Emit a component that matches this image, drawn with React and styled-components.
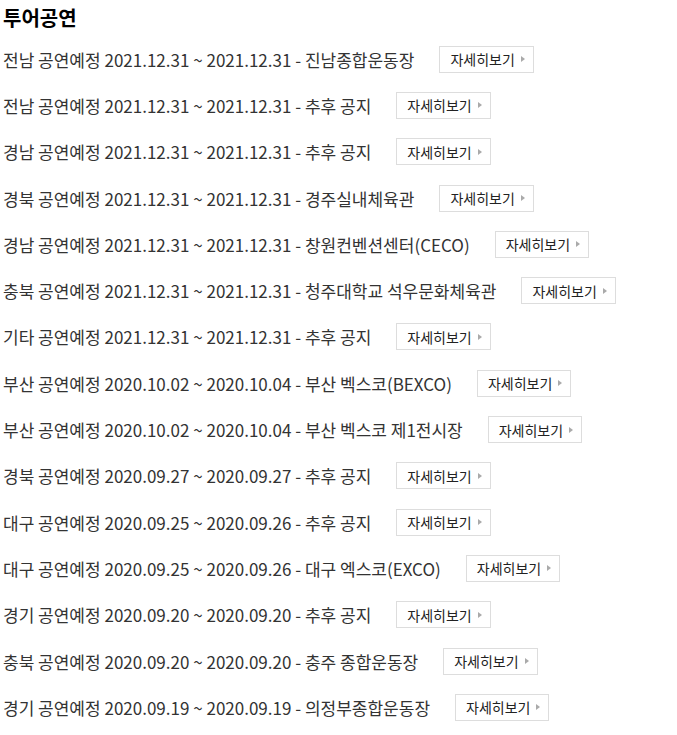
import React from "react";
import styled, { createGlobalStyle } from "styled-components";

const GlobalStyle = createGlobalStyle`
  body {
    margin: 0;
    background: #fff;
    font-family: "Noto Sans CJK KR", "Noto Sans", sans-serif;
    color: #333;
  }
`;

const tours = [
  ["전남", "2021.12.31", "2021.12.31", "진남종합운동장"],
  ["전남", "2021.12.31", "2021.12.31", "추후 공지"],
  ["경남", "2021.12.31", "2021.12.31", "추후 공지"],
  ["경북", "2021.12.31", "2021.12.31", "경주실내체육관"],
  ["경남", "2021.12.31", "2021.12.31", "창원컨벤션센터(CECO)"],
  ["충북", "2021.12.31", "2021.12.31", "청주대학교 석우문화체육관"],
  ["기타", "2021.12.31", "2021.12.31", "추후 공지"],
  ["부산", "2020.10.02", "2020.10.04", "부산 벡스코(BEXCO)"],
  ["부산", "2020.10.02", "2020.10.04", "부산 벡스코 제1전시장"],
  ["경북", "2020.09.27", "2020.09.27", "추후 공지"],
  ["대구", "2020.09.25", "2020.09.26", "추후 공지"],
  ["대구", "2020.09.25", "2020.09.26", "대구 엑스코(EXCO)"],
  ["경기", "2020.09.20", "2020.09.20", "추후 공지"],
  ["충북", "2020.09.20", "2020.09.20", "충주 종합운동장"],
  ["경기", "2020.09.19", "2020.09.19", "의정부종합운동장"],
];

function App() {
  return (
    <>
      <GlobalStyle />
      <Section>
        <Title>투어공연</Title>
        <List>
          {tours.map(([region, from, to, place], i) => (
            <Row key={i}>
              <Info>
                {region} 공연예정 {from} ~ {to} - {place}
              </Info>
              <MoreButton type="button">
                자세히보기
                <Arrow />
              </MoreButton>
            </Row>
          ))}
        </List>
      </Section>
    </>
  );
}

export default App;

const Section = styled.div`
  padding: 4px 3px;
`;

const Title = styled.h2`
  margin: 0;
  font-size: 20px;
  font-weight: 700;
  line-height: 28px;
  color: #000;
`;

const List = styled.ul`
  list-style: none;
  margin: 0;
  padding: 4px 0 0;
`;

const Row = styled.li`
  display: flex;
  align-items: center;
  height: 46.3px;
`;

const Info = styled.span`
  font-size: 17px;
  color: #333;
  white-space: nowrap;
`;

const MoreButton = styled.button`
  display: inline-flex;
  align-items: center;
  margin-left: 25px;
  height: 27px;
  padding: 0 8px 0 10px;
  border: 1px solid #ddd;
  background: #fff;
  font-family: inherit;
  font-size: 14px;
  color: #222;
  cursor: pointer;
`;

const Arrow = styled.span`
  margin-left: 6px;
  width: 0;
  height: 0;
  border-top: 3px solid transparent;
  border-bottom: 3px solid transparent;
  border-left: 4px solid #aaa;
`;
